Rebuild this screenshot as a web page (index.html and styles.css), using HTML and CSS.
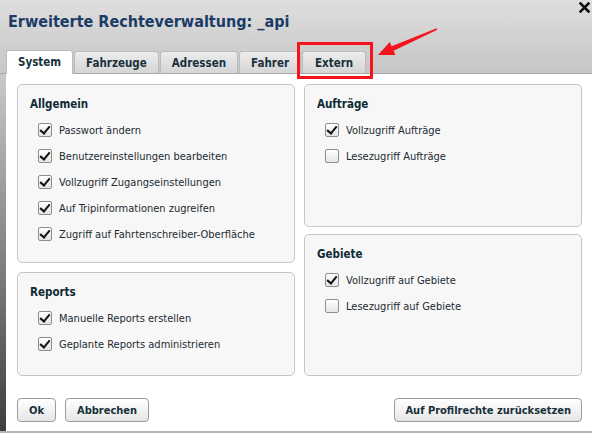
FILE: index.html
```html
<!DOCTYPE html>
<html>
<head>
<meta charset="utf-8">
<link rel="stylesheet" href="styles.css">
</head>
<body>
<div class="dialog">
  <div class="header">
    <div class="title-row">
      <h1 class="title">Erweiterte Rechteverwaltung: _api</h1>
      <svg class="close" width="11" height="11" viewBox="0 0 11 11"><path d="M1.5 1.5 L9.5 9.5 M9.5 1.5 L1.5 9.5" stroke="#111" stroke-width="2.6" stroke-linecap="square"/></svg>
    </div>
    <div class="tabs">
      <div class="tab active">System</div>
      <div class="tab">Fahrzeuge</div>
      <div class="tab">Adressen</div>
      <div class="tab">Fahrer</div>
      <div class="tab tab-extern">Extern</div>
    </div>
  </div>
  <div class="main">
    <div class="strip"></div>
    <div class="content">
      <div class="grid">
        <div class="col">
          <div class="panel p-allg">
            <div class="panel-title">Allgemein</div>
            <label class="row"><span class="cb on"></span>Passwort ändern</label>
            <label class="row"><span class="cb on"></span>Benutzereinstellungen bearbeiten</label>
            <label class="row"><span class="cb on"></span>Vollzugriff Zugangseinstellungen</label>
            <label class="row"><span class="cb on"></span>Auf Tripinformationen zugreifen</label>
            <label class="row"><span class="cb on"></span>Zugriff auf Fahrtenschreiber-Oberfläche</label>
          </div>
          <div class="panel p-rep">
            <div class="panel-title">Reports</div>
            <label class="row"><span class="cb on"></span>Manuelle Reports erstellen</label>
            <label class="row"><span class="cb on"></span>Geplante Reports administrieren</label>
          </div>
        </div>
        <div class="col col-right">
          <div class="panel p-auf">
            <div class="panel-title">Aufträge</div>
            <label class="row"><span class="cb on"></span>Vollzugriff Aufträge</label>
            <label class="row"><span class="cb"></span>Lesezugriff Aufträge</label>
          </div>
          <div class="panel p-geb">
            <div class="panel-title">Gebiete</div>
            <label class="row"><span class="cb on"></span>Vollzugriff auf Gebiete</label>
            <label class="row"><span class="cb"></span>Lesezugriff auf Gebiete</label>
          </div>
        </div>
      </div>
      <div class="footer">
        <button class="btn btn-ok">Ok</button>
        <button class="btn">Abbrechen</button>
        <span class="spacer"></span>
        <button class="btn btn-reset">Auf Profilrechte zurücksetzen</button>
      </div>
    </div>
  </div>
  <div class="highlight"></div>
  <svg class="arrow" width="592" height="100" viewBox="0 0 592 100">
    <polygon points="436.7,28.3 391.6,46.2 389.8,42.1 378,55 395.4,54.9 393.6,50.8 437.3,29.7" fill="#f5141e"/>
  </svg>
</div>
</body>
</html>
```
FILE: styles.css
```css
* { box-sizing: border-box; }
html, body { margin: 0; padding: 0; }
body {
  width: 592px;
  height: 433px;
  overflow: hidden;
  font-family: "DejaVu Sans Condensed", "DejaVu Sans", sans-serif;
  font-size: 11px;
  color: #1c2a32;
  background: #fff;
}
.dialog {
  position: relative;
  width: 592px;
  height: 433px;
  display: flex;
  flex-direction: column;
}
.header {
  height: 74px;
  background: linear-gradient(#dedede, #c6c6c6);
  border-bottom: 1px solid #a9a9a9;
  display: flex;
  flex-direction: column;
  justify-content: space-between;
}
.title-row {
  display: flex;
  justify-content: space-between;
  align-items: flex-start;
  padding: 12px 0 0 8px;
}
.title {
  margin: 0;
  font-size: 16px;
  font-weight: bold;
  color: #1b3c66;
  line-height: 20px;
}
.close {
  margin: -10px 2px 0 0;
}
.tabs {
  display: flex;
  padding-left: 6px;
  margin-bottom: -1px;
}
.tab {
  height: 23px;
  padding: 0 11px;
  border: 1px solid #bcbcbc;
  border-radius: 3px 3px 0 0;
  background: linear-gradient(#ececec, #d5d5d5);
  font-weight: bold;
  font-size: 11.5px;
  color: #18313c;
  line-height: 22px;
  margin-right: 1px;
  border-bottom: 1px solid #a9a9a9;
}
.tab.active {
  background: #fff;
  height: 24px;
  margin-top: -1px;
  border-bottom: 1px solid #fff;
  line-height: 23px;
}
.tab-extern { padding: 0 12px; }
.main {
  flex: 1;
  display: flex;
  border-bottom: 2px solid #b4b4b4;
}
.strip {
  width: 6px;
  background: linear-gradient(#c9c9c9, #3e3e3e);
}
.content {
  flex: 1;
  display: flex;
  flex-direction: column;
  padding: 10px 10px 0 11px;
}
.grid {
  display: grid;
  grid-template-columns: 278px 278px;
  column-gap: 9px;
}
.col { display: flex; flex-direction: column; gap: 9px; }
.col-right { gap: 7px; }
.panel {
  background: #f7f7f7;
  border: 1px solid #c6c6c6;
  border-radius: 5px;
  padding: 11px 12px 0 12px;
}
.p-allg { height: 179px; }
.p-rep { height: 104px; }
.p-auf { height: 143px; }
.p-geb { height: 142px; }
.panel-title {
  font-weight: bold;
  color: #0f2a35;
  font-size: 11.5px;
  line-height: 16px;
  margin-bottom: 5px;
}
.row {
  display: flex;
  align-items: center;
  height: 26px;
  padding-left: 8px;
  color: #1c2a32;
}
.cb {
  width: 14px;
  height: 14px;
  border: 1px solid #8e8e8e;
  border-radius: 2px;
  background: linear-gradient(#ffffff, #e4e4e4);
  margin-right: 7px;
  position: relative;
  flex: none;
}
.cb.on::after {
  content: "";
  position: absolute;
  left: 3px;
  top: 0px;
  width: 4px;
  height: 8px;
  border-right: 2px solid #111;
  border-bottom: 2px solid #111;
  transform: rotate(40deg);
}
.footer {
  display: flex;
  align-items: center;
  gap: 9px;
  margin-top: 22px;
}
.spacer { flex: 1; }
.btn {
  height: 24px;
  padding: 0 11px;
  font-family: inherit;
  font-size: 11px;
  font-weight: bold;
  color: #18303a;
  background: linear-gradient(#ffffff, #e6e6e6);
  border: 1px solid #9a9a9a;
  border-radius: 4px;
  margin: 0;
}
.btn-reset { padding: 0 10px; }
.highlight {
  position: absolute;
  left: 297px;
  top: 42px;
  width: 76px;
  height: 37px;
  border: 3px solid #f5141e;
}
.arrow {
  position: absolute;
  left: 0;
  top: 0;
}
```
